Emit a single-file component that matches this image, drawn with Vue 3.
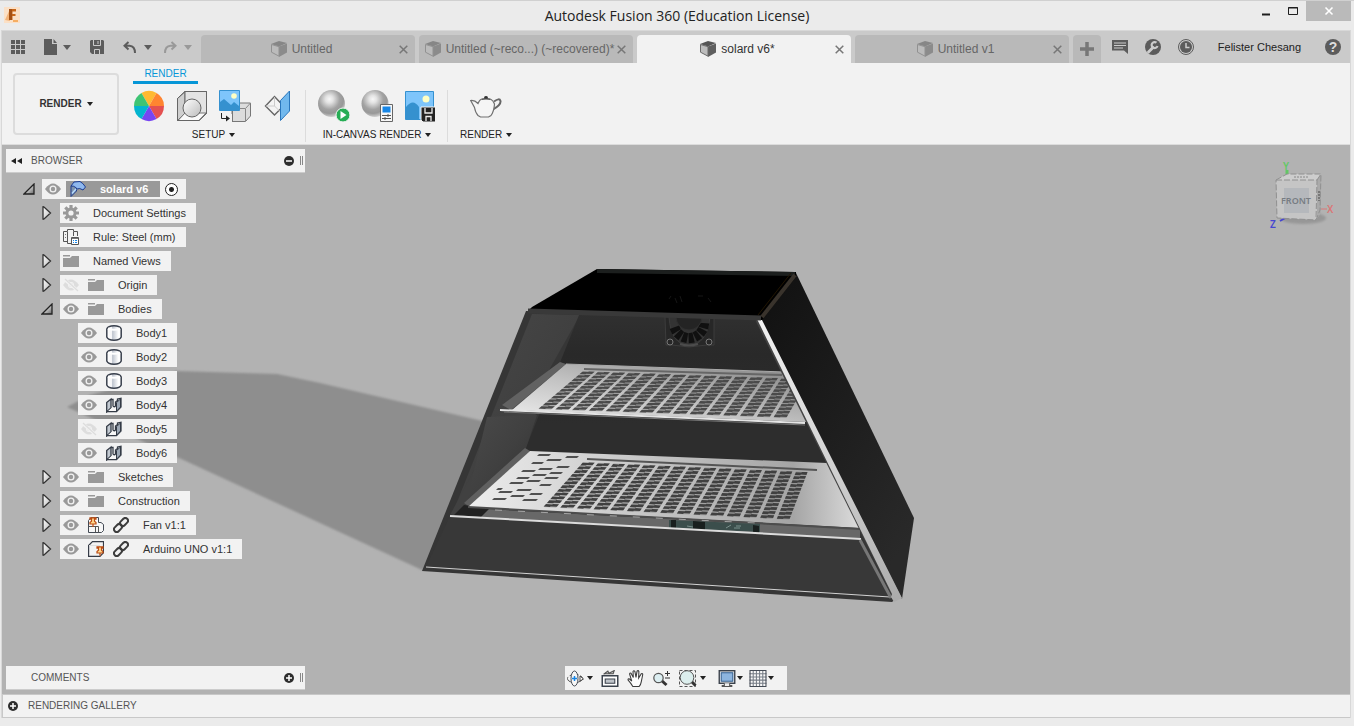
<script setup>
import { ref } from 'vue'

const tabs = [
  { title: 'Untitled', active: false },
  { title: 'Untitled (~reco...) (~recovered)*', active: false },
  { title: 'solard v6*', active: true },
  { title: 'Untitled v1', active: false }
]

const groups = [
  { label: 'SETUP', icons: [['appearance', 'Appearance'], ['scene', 'Scene Settings'], ['decal', 'Decal'], ['texture', 'Texture Map Controls']] },
  { label: 'IN-CANVAS RENDER', icons: [['play-ball', 'In-canvas Render'], ['set-ball', 'In-canvas Render Settings'], ['capture', 'Capture Image']] },
  { label: 'RENDER', icons: [['teapot', 'Render']] }
]

const rows = [
  { level: 1, open: false, icons: ['gear'], text: 'Document Settings' },
  { level: 1, icons: ['rule'], text: 'Rule: Steel (mm)' },
  { level: 1, open: false, icons: ['folder'], text: 'Named Views' },
  { level: 1, open: false, icons: ['eye-off', 'folder'], text: 'Origin' },
  { level: 1, open: true, icons: ['eye', 'folder'], text: 'Bodies' },
  { level: 2, icons: ['eye', 'body'], text: 'Body1' },
  { level: 2, icons: ['eye', 'body'], text: 'Body2' },
  { level: 2, icons: ['eye', 'body'], text: 'Body3' },
  { level: 2, icons: ['eye', 'sheet'], text: 'Body4' },
  { level: 2, icons: ['eye-off', 'sheet'], text: 'Body5' },
  { level: 2, icons: ['eye', 'sheet'], text: 'Body6' },
  { level: 1, open: false, icons: ['eye', 'folder'], text: 'Sketches' },
  { level: 1, open: false, icons: ['eye', 'folder'], text: 'Construction' },
  { level: 1, open: false, icons: ['eye', 'asm', 'link'], text: 'Fan v1:1' },
  { level: 1, open: false, icons: ['eye', 'part', 'link'], text: 'Arduino UNO v1:1' }
]

const nav = [
  { icon: 'orbit', name: 'Orbit', caret: true },
  { icon: 'lookat', name: 'Look At' },
  { icon: 'hand', name: 'Pan' },
  { icon: 'zoom', name: 'Zoom' },
  { icon: 'zoomwin', name: 'Fit', caret: true },
  { icon: 'monitor', name: 'Display Settings', caret: true, gap: true },
  { icon: 'grid', name: 'Grid and Snaps', caret: true }
]

const activeRoot = ref('solard')

// Slots of a perforated shelf, interpolated between the corners of its grid.
function perforations(tl, tr, br, bl, cols, rowCount) {
  const at = (u, v) => {
    const x = (tl[0] * (1 - u) + tr[0] * u) * (1 - v) + (bl[0] * (1 - u) + br[0] * u) * v
    const y = (tl[1] * (1 - u) + tr[1] * u) * (1 - v) + (bl[1] * (1 - u) + br[1] * u) * v
    return x.toFixed(1) + ' ' + y.toFixed(1)
  }
  let slots = ''
  let bands = ''
  for (let c = 0; c < cols; c++) {
    const u0 = (c + 0.02) / cols
    const um = (c + 0.4) / cols
    const u1 = (c + 0.78) / cols
    bands += `M${at(u0, 0)}L${at(u1, 0)} ${at(u1, 1)} ${at(u0, 1)}Z`
    for (let r = 0; r < rowCount; r++) {
      const v0 = (r + 0.14) / rowCount
      const v1 = (r + 0.82) / rowCount
      const s = 0.07 / rowCount
      slots += `M${at(u0, v0 + s)}L${at(um, v0 + s)} ${at(um, v0 - s)} ${at(u1, v0 - s)} ${at(u1, v1 - s)} ${at(um, v1 - s)} ${at(um, v1 + s)} ${at(u0, v1 + s)}Z`
    }
  }
  return { slots, bands }
}

const upper = perforations([583, 371], [812, 379], [790, 418], [538, 409], 15, 11)
const lower = perforations([583, 462], [811, 472], [793, 520], [543, 507], 15, 12)
const looseHoles = [
  [538, 454, 13], [566, 456, 13], [547, 459, 15], [532, 462, 12], [557, 466, 13], [539, 468, 14],
  [522, 470, 14], [550, 472, 13], [533, 474, 14], [545, 477, 14], [517, 477, 13], [527, 480, 14],
  [510, 482, 14], [540, 484, 12], [497, 488, 6], [517, 489, 15], [499, 491, 14], [530, 493, 13],
  [511, 495, 14], [493, 498, 14], [523, 499, 15]
].map(([x, y, w]) => `M${x + 1} ${y}h${w - 1}l-2 2h${1 - w}z`).join('')
const blades = [10, 34, 58, 82, 106, 130, 154]
</script>

<template>
  <div class="app">
    <svg class="defs" width="0" height="0" aria-hidden="true">
      <defs>
        <radialGradient id="ball" cx=".42" cy=".34" r=".7">
          <stop offset="0" stop-color="#f7f7f7" /><stop offset=".2" stop-color="#e3e3e3" /><stop offset=".55" stop-color="#a2a2a2" /><stop offset=".75" stop-color="#989898" /><stop offset="1" stop-color="#dedede" />
        </radialGradient>
        <linearGradient id="grey" x1="0" y1="0" x2="1" y2="1"><stop offset="0" stop-color="#fff" /><stop offset="1" stop-color="#bbb" /></linearGradient>
        <linearGradient id="dusk" x1="0" y1="0" x2="1" y2="1"><stop offset=".3" stop-color="#eee" /><stop offset="1" stop-color="#666" /></linearGradient>
        <linearGradient id="cyl"><stop offset="0" stop-color="#fff" /><stop offset=".35" stop-color="#f5f5f7" /><stop offset=".4" stop-color="#bfc5cf" /><stop offset=".8" stop-color="#fff" /></linearGradient>
      </defs>
      <symbol id="fusion" viewBox="0 0 16 16"><path d="M0 0h16v16H0z" fill="#fbe0c6" /><path d="M1 13 6 2v12z" fill="#f3b47a" /><path d="M5 2h7v2.500H8.500V7h3v2h-3v4H5z" fill="#c76618" /><path d="M5 2h3v11H5z" fill="#8f4312" opacity=".6" /><path d="M9 14h5" stroke="#f5ad62" stroke-width="2" /></symbol>
      <symbol id="apps" viewBox="0 0 14 14"><path d="M0 0h4v4H0zM5 0h4v4H5zM10 0h4v4h-4zM0 5h4v4H0zM5 5h4v4H5zM10 5h4v4h-4zM0 10h4v4H0zM5 10h4v4H5zM10 10h4v4h-4z" fill="#5c5c5c" /></symbol>
      <symbol id="file" viewBox="0 0 14 16"><path d="M0 0h8v5h5v11H0zM9.500 0 13 4H9.500z" fill="#5c5c5c" /></symbol>
      <symbol id="save" viewBox="0 0 14 14"><path d="M1 0h12l1 1v13H2l-2-2V1z" fill="#5c5c5c" /><path d="M3.500 0v5.500h7V0M4.500 14V9.500h5V14" fill="none" stroke="#ccc" /><path d="M8 1v3" stroke="#ccc" /></symbol>
      <symbol id="undo" viewBox="0 0 14 13"><path d="M5.500 1 1.500 4.700l4 3.700M2 4.700h4.500Q12 5 12 12" fill="none" stroke="#5c5c5c" stroke-width="2" /></symbol>
      <symbol id="redo" viewBox="0 0 14 13"><path d="m8.500 1 4 3.700-4 3.700M12 4.700H7.500Q2 5 2 12" fill="none" stroke="#999" stroke-width="2" /></symbol>
      <symbol id="cube" viewBox="0 0 16 16"><path d="m0 3 8-3 8 2-8 3.500z" fill="#555" /><path d="m8 5.500 8-3v9L8 16z" fill="#5f5f5f" /><path d="M.5 3.500 8 5.700v9.500l-7.500-4z" fill="#bdbdbd" stroke="#6a6a6a" /></symbol>
      <symbol id="cross" viewBox="0 0 9 9"><path d="m.7.7 7.600 7.600m0-7.600L.7 8.300" fill="none" stroke="currentColor" stroke-width="1.500" /></symbol>
      <symbol id="chat" viewBox="0 0 16 15"><path d="M0 0h16v14l-4-3.500H0z" fill="#5c5c5c" /><path d="M2 3h12M2 5.500h12M2 8h9" stroke="#ccc" /></symbol>
      <symbol id="wrench" viewBox="0 0 16 16"><circle cx="8" cy="8" r="8" fill="#5c5c5c" /><path d="m3.500 13 4.500-4.500" stroke="#ccc" stroke-width="3" stroke-linecap="round" /><path d="M11.500 3.700A3 3 0 1 0 12.500 7" fill="none" stroke="#ccc" stroke-width="2.200" /></symbol>
      <symbol id="clock" viewBox="0 0 16 16"><circle cx="8" cy="8" r="7.500" fill="none" stroke="#5c5c5c" /><circle cx="8" cy="8" r="6" fill="#5c5c5c" /><path d="M8 4v4.500h3.500" fill="none" stroke="#ccc" stroke-width="1.500" /></symbol>
      <symbol id="appearance" viewBox="0 0 32 32"><g transform="translate(16 16)"><path d="M0 0-7.500-13A15 15 0 0 1 7.500-13z" fill="#ffb932" /><path d="M0 0 7.500-13A15 15 0 0 1 15 0z" fill="#ff8430" /><path d="M0 0h15A15 15 0 0 1 7.500 13z" fill="#e45050" /><path d="m0 0 7.500 13a15 15 0 0 1-15 0z" fill="#7745f2" /><path d="M0 0-7.500 13A15 15 0 0 1-15 0z" fill="#04b5cf" /><path d="M0 0h-15A15 15 0 0 1-7.500-13z" fill="#3ec474" /></g></symbol>
      <symbol id="scene" viewBox="0 0 32 32"><path d="M1.500 8.500 9 1.500V23l-7.500 7.500z" fill="#cfcfcf" stroke="#666" /><path d="M9 1.500h21.500v22L23 30.500H1.500L9 23z" fill="#e3e3e3" stroke="#666" /><path d="m9 23-7 7.500h21l7-7.500z" fill="#fafafa" stroke="#777" /><circle cx="16" cy="18" r="9" fill="url(#grey)" stroke="#666" /><path d="M1.500 30.500H23l7.500-7V1.500H9l-7.500 7z" fill="none" stroke="#666" /></symbol>
      <symbol id="decal" viewBox="0 0 32 32"><path d="M13 18.500 19 13h12.500v13l-5 5.500H13z" fill="#dcdcdc" stroke="#777" /><path d="M26.500 31V18.500l5-5.500M26 18.500H14" fill="none" stroke="#888" /><path d="M0 21h10.500v3H13v8H0z" fill="#f2f2f2" /><path d="M13.500 21v10.500" stroke="#777" /><path d="M.5.5h20v20H.5z" fill="#7ec5fb" stroke="#3591d0" /><path d="M1 20v-8l4-3 7 6 3-3 5 4v4z" fill="#3591cf" /><circle cx="15" cy="6" r="2.800" fill="#ffffc4" /><path d="M2.500 23v5.500H8" fill="none" stroke="#222" /><path d="m7 25.500 4 3-4 3z" fill="#222" /></symbol>
      <symbol id="texture" viewBox="0 0 32 32"><path d="m3.500 16 9-9.500 9 9.500-9 9z" fill="#f4f4f4" stroke="#666" stroke-width="1.400" /><path d="M12.500 7v9L4 16M12.500 16l8 8" stroke="#ccc" fill="none" /><path d="M18.500 10.500 27.500 1v20l-9 9.500z" fill="#71b8ed" stroke="#2a77bd" /></symbol>
      <symbol id="play-ball" viewBox="0 0 32 32"><circle cx="13.500" cy="13.500" r="13.500" fill="url(#ball)" /><circle cx="25" cy="25" r="7" fill="#27ad55" stroke="#f5f5f5" /><path d="m22.500 21 6 4-6 4z" fill="#fff" /></symbol>
      <symbol id="set-ball" viewBox="0 0 32 32"><circle cx="14" cy="13.500" r="13.500" fill="url(#ball)" /><path d="M19.500 14.500h12v17h-12z" fill="#f7f7f7" stroke="#666" /><path d="M21.500 16.500h8v6h-8z" fill="#1786e6" /><path d="M21 25.500h9M21 28.500h9M27 24v3M24 27v3" stroke="#555" /></symbol>
      <symbol id="capture" viewBox="0 0 32 32"><path d="M1.500 1.500h28v28h-28z" fill="#7ec5fb" stroke="#3591d0" /><path d="M2 29V17q7-9 13 0v12z" fill="#3591cf" /><circle cx="22" cy="9" r="3.500" fill="#ffffc4" /><path d="M17 17h14.500v15H19l-2-2z" fill="#222" stroke="#f2f2f2" /><path d="M21 18v5h7v-5M22 31v-4.500h5V31" fill="none" stroke="#eee" stroke-width="1.300" /></symbol>
      <symbol id="teapot" viewBox="0 0 32 32"><path d="M24 11.500q5.500-4 6.500-.5.500 4-7 8" fill="none" stroke="#666" stroke-width="2" /><path d="M.7 10.500q4-.5 7.300 3 1.500-4 4-4.500h8q3 1 4.500 5-.500 7.500-3.500 11.500l-2.500 1.500h-8L8 25.500Q5.500 23 4.500 17.500z" fill="#f5f5f5" stroke="#707070" stroke-width="1.200" /><path d="M12 9.300q4-1.500 8 0" fill="none" stroke="#555" stroke-width="1.300" /><path d="M14.300 8.500q-.8-2.500 1.700-2.500t1.700 2.500z" fill="#333" /></symbol>
      <symbol id="eye" viewBox="0 0 16 16"><path d="M0 8q8-11 16 0-8 11-16 0z" fill="#999" /><circle cx="8" cy="8" r="3.500" fill="#f2f2f2" /><circle cx="8" cy="8" r="2.200" fill="#999" /></symbol>
      <symbol id="eye-off" viewBox="0 0 16 16"><path d="M0 8q8-11 16 0-8 11-16 0z" fill="#ddd" /><circle cx="8" cy="8" r="3" fill="#f2f2f2" /><circle cx="8" cy="8" r="2" fill="#ddd" /><path d="m1 2 14 12" stroke="#f2f2f2" stroke-width="3" /><path d="m2 2 13 12" stroke="#ddd" stroke-width="1.300" /></symbol>
      <symbol id="gear" viewBox="0 0 16 16"><path d="M8 0v16M0 8h16M2.300 2.300l11.400 11.400m0-11.400L2.300 13.700" stroke="#999" stroke-width="3.200" /><circle cx="8" cy="8" r="5.500" fill="#999" /><circle cx="8" cy="8" r="2.600" fill="#f2f2f2" /></symbol>
      <symbol id="rule" viewBox="0 0 16 16"><path d="M8 14.500H4.500v-2h-4v-10h4v-2h6v2h4V7M4.500 3v10M10.500 3v4" fill="none" stroke="#555" /><path d="M2.500 5v5" stroke="#777" stroke-dasharray="1 2" /><path d="M8.500 8.500h7v7h-7z" fill="#fff" stroke="#555" /><path d="M9 9h6v1H9z" fill="#777" /><path d="M10 11.500h4M10 13.500h4" stroke="#1786e6" stroke-dasharray="1 1 3 1" /></symbol>
      <symbol id="folder" viewBox="0 0 16 14"><path d="M0 1h7v1.500H0zM0 4h7l2-2h7v11H0z" fill="#999" /></symbol>
      <symbol id="body" viewBox="0 0 16 16"><path d="M.8 4Q2 .8 8 .8T15.200 4v8q-1.200 3.200-7.200 3.200T.8 12z" fill="url(#cyl)" stroke="#39404d" stroke-width="1.500" /><path d="M2 3.500q6 2.500 12 0" fill="none" stroke="#fff" stroke-width="2" /></symbol>
      <symbol id="sheet" viewBox="0 0 16 16"><path d="M.7 5.500 5 2v9l-4.300 4z" fill="#c3cad2" stroke="#343b46" stroke-width="1.300" /><path d="M1 15 5.500 11H10v4z" fill="#f8f8f8" /><path d="M5 2.500h2V9q1 1.500 2.500 0V5l2-1.500V2L15 1.300V10l-4.500 4.700H1" fill="none" stroke="#343b46" stroke-width="1.300" /><path d="M10.500 5.500 14.500 2v8l-4 4.200z" fill="#9da8b5" stroke="#343b46" /></symbol>
      <symbol id="asm" viewBox="0 0 16 16"><path d="M.5 3.500 3 .5h7.500v5L13 5.500l2.500 2v6l-2 2H.5z" fill="#f7f7f7" stroke="#444b55" /><path d="M.5 9.500h10v6M7.500 9.500v6" fill="none" stroke="#555" /><use href="#pin" x="1" y="0" width="8" height="10" /></symbol>
      <symbol id="part" viewBox="0 0 16 16"><path d="M.6 4.500 4.500.6h11v11l-3.500 3.800H.6z" fill="#f3f3f3" stroke="#353b46" stroke-width="1.200" /><path d="M1 4.500h10.500V15" fill="none" stroke="#ddd" /><use href="#pin" x="8" y="5" width="8" height="10" /></symbol>
      <symbol id="pin" viewBox="0 0 8 10"><path d="M1 .8h6v1.400H5.500v2L7 5.500V7H1V5.500l1.500-1.300v-2H1z" fill="#ffd98d" stroke="#bc4b13" stroke-width="1.200" /><path d="M4 7v3" stroke="#bc4b13" stroke-width="1.200" /></symbol>
      <symbol id="link" viewBox="0 0 16 16"><g fill="none" stroke="#3d3d3d" stroke-width="2"><rect x="-4.500" y="-2.700" width="9" height="5.400" rx="2.700" transform="translate(11 5) rotate(-45)" /><rect x="-4.500" y="-2.700" width="9" height="5.400" rx="2.700" transform="translate(5 11) rotate(-45)" /></g></symbol>
      <symbol id="plane" viewBox="0 0 16 16"><path d="m1 5 3-4 6-.5Q13 2 15.500 6L13 9Q9.500 6.500 7 8z" fill="#8fb8ee" stroke="#1c3c91" /><path d="M1 5v10.500L6.500 10V7Q3.500 4.500 1 5z" fill="#7f93ad" stroke="#1d3c8d" /><path d="m2 12.500 4-4.500" stroke="#b5dcff" stroke-width="1.500" /></symbol>
      <symbol id="closed" viewBox="0 0 12 14"><path d="M2 .8Q2 .5 3 1l6.500 6L3 13q-1 .5-1 0z" fill="url(#grey)" stroke="#333" stroke-width="1.300" /></symbol>
      <symbol id="opened" viewBox="0 0 12 12"><path d="M11 1v10H1z" fill="url(#dusk)" stroke="#222" stroke-width="1.300" /></symbol>
      <symbol id="orbit" viewBox="0 0 18 16"><ellipse cx="8" cy="8" rx="7.500" ry="4" fill="#f7f7f7" stroke="#555" stroke-dasharray="9 2" /><ellipse cx="7.500" cy="8" rx="3.500" ry="7.500" fill="#f7f7f7" stroke="#444b55" /><path d="M7.500 5.500v5M5 8h5" stroke="#1786e6" stroke-width="1.500" /><path d="m13 5.500 3.500 3-3.500 2z" fill="#fff" stroke="#444" /></symbol>
      <symbol id="lookat" viewBox="0 0 16 16"><path d="m2 4 4-3 1 2 5-2.500-1 3H3z" fill="#bbb" stroke="#555" /><path d="M.7 5.500h14.600v9.800H.7z" fill="#fff" stroke="#3b424c" stroke-width="1.400" /><path d="M3.500 8.500h9v4h-9z" fill="#bfc4ca" stroke="#3b424c" /></symbol>
      <symbol id="hand" viewBox="0 0 16 16"><path d="M5 15.500Q3 12 .6 9.500q-.5-1.500 1.400-1l2 2L2 4q0-1.500 1.300-1L5.500 7 5.200 1.500q.8-1.500 1.800 0L8 7l1-6q1-1 1.700.3L10.500 7.500 13 3.500q1.500-.5 1.300 1L13 11q-.5 3-2 4.500z" fill="#fcfcfc" stroke="#3b3b3b" /></symbol>
      <symbol id="zoom" viewBox="0 0 18 16"><path d="m8.500 10 5 4.500" stroke="#333" stroke-width="3" /><circle cx="5.500" cy="7.500" r="4.700" fill="#dceef1" stroke="#555" stroke-width="1.200" /><path d="M12 3h5M14.500.5v5M12 7.500h5" stroke="#333" /></symbol>
      <symbol id="zoomwin" viewBox="0 0 18 17"><path d="M.5.500h16v16H.5z" fill="none" stroke="#555" stroke-dasharray="3 2" /><path d="m12 11 4.500 4.500" stroke="#333" stroke-width="3" /><circle cx="8" cy="7.500" r="6.800" fill="#dceeed" stroke="#555" /></symbol>
      <symbol id="monitor" viewBox="0 0 16 16"><path d="M.7.7h14.600v11.800H.7z" fill="#fff" stroke="#3b424c" stroke-width="1.300" /><path d="M2.500 2.500h11v8h-11z" fill="#8db5df" stroke="#315c8c" /><path d="M5.500 12.500v2h-2v1h9v-1h-2v-2" fill="#eee" stroke="#555" /></symbol>
      <symbol id="grid" viewBox="0 0 16 16"><path d="M.5.5h15v15H.5z" fill="#f8f8f8" /><path d="M3.500 0v16M6.500 0v16M9.500 0v16M12.500 0v16M0 3.500h16M0 6.500h16M0 9.500h16M0 12.500h16" stroke="#777e87" /><path d="M.5.5h15v15H.5z" fill="none" stroke="#444b55" /></symbol>
      <symbol id="minus" viewBox="0 0 10 10"><circle cx="5" cy="5" r="5" fill="#2d2d2d" /><path d="M2 5h6" stroke="#fff" stroke-width="1.500" /></symbol>
      <symbol id="plus" viewBox="0 0 10 10"><circle cx="5" cy="5" r="5" fill="#2d2d2d" /><path d="M2 5h6M5 2v6" stroke="#fff" stroke-width="1.500" /></symbol>
    </svg>

    <header class="titlebar">
      <svg class="logo"><use href="#fusion" /></svg>
      <h1>Autodesk Fusion 360 (Education License)</h1>
      <div class="win">
        <button aria-label="Minimize"><svg viewBox="0 0 10 10"><path d="M1 8.500h8" stroke="#1e1e1e" stroke-width="2" /></svg></button>
        <button aria-label="Maximize"><svg viewBox="0 0 10 10"><path d="M.5 1.500h9v7h-9zM0 2h10" fill="none" stroke="#1e1e1e" /></svg></button>
        <button class="close" aria-label="Close"><svg viewBox="0 0 10 10"><path d="m1.500 1.500 7 7m0-7-7 7" stroke="#fff" stroke-width="1.600" /></svg></button>
      </div>
    </header>

    <main class="frame">
      <div class="tabbar">
        <div class="quick">
          <button aria-label="Data Panel"><svg width="14" height="14"><use href="#apps" /></svg></button>
          <button aria-label="File"><svg width="14" height="16"><use href="#file" /></svg><i class="caret wide"></i></button>
          <button aria-label="Save"><svg width="14" height="14"><use href="#save" /></svg></button>
          <button aria-label="Undo"><svg width="14" height="13"><use href="#undo" /></svg><i class="caret wide"></i></button>
          <button class="dim" aria-label="Redo"><svg width="14" height="13"><use href="#redo" /></svg><i class="caret wide"></i></button>
        </div>
        <div class="tabs">
          <div v-for="t in tabs" :key="t.title" class="tab" :class="{ active: t.active }">
            <button class="doc"><svg width="16" height="16"><use href="#cube" /></svg><span>{{ t.title }}</span></button>
            <button class="x" :aria-label="'Close ' + t.title"><svg width="9" height="9"><use href="#cross" /></svg></button>
          </div>
          <button class="tab add" aria-label="New tab"><svg width="14" height="14" viewBox="0 0 14 14"><path d="M7 0v14M0 7h14" stroke="#777" stroke-width="3.500" /></svg></button>
        </div>
        <div class="account">
          <button aria-label="Comments"><svg width="16" height="15"><use href="#chat" /></svg></button>
          <button aria-label="Extensions"><svg width="16" height="16"><use href="#wrench" /></svg></button>
          <button aria-label="Job Status"><svg width="16" height="16"><use href="#clock" /></svg></button>
          <button class="user">Felister Chesang</button>
          <button class="help" aria-label="Help">?</button>
        </div>
      </div>

      <div class="ribbon">
        <button class="workspace">RENDER <i class="caret"></i></button>
        <div class="ribbon-main">
          <button class="ribbon-tab">RENDER</button>
          <div class="groups">
            <section v-for="g in groups" :key="g.label" class="group">
              <div class="tools">
                <button v-for="[id, name] in g.icons" :key="id" :aria-label="name"><svg width="32" height="32"><use :href="'#' + id" /></svg></button>
              </div>
              <button class="glabel">{{ g.label }} <i class="caret"></i></button>
            </section>
          </div>
        </div>
      </div>

      <div class="canvas">
        <svg class="scene" viewBox="0 0 1348 549" role="img" aria-label="Solar dryer model">
          <defs>
            <linearGradient id="wall" x1="0" y1="0" x2="1" y2="1"><stop offset="0" stop-color="#4a4a4a" /><stop offset=".5" stop-color="#404040" /><stop offset="1" stop-color="#303030" /></linearGradient>
            <linearGradient id="shelfA" x1="0" y1="1" x2="1" y2="0"><stop offset="0" stop-color="#efefef" /><stop offset=".45" stop-color="#c2c2c2" /><stop offset="1" stop-color="#808080" /></linearGradient>
            <linearGradient id="shelfB"><stop offset="0" stop-color="#ededed" /><stop offset=".4" stop-color="#cacaca" /><stop offset=".83" stop-color="#a5a5a5" /><stop offset="1" stop-color="#dcdcdc" /></linearGradient>
            <linearGradient id="side" x1="0" y1="0" x2=".7" y2="1"><stop offset="0" stop-color="#101010" /><stop offset="1" stop-color="#292929" /></linearGradient>
            <linearGradient id="rear" x1="0" y1="0" x2="0" y2="1"><stop offset="0" stop-color="#303030" /><stop offset=".18" stop-color="#292929" /><stop offset=".5" stop-color="#2d2d2d" /></linearGradient>
            <linearGradient id="rail" x1="0" y1="0" x2="0" y2="1"><stop offset="0" stop-color="#f2f2f2" /><stop offset=".55" stop-color="#d0d0d0" /><stop offset="1" stop-color="#aaa" /></linearGradient>
            <filter id="soft"><feGaussianBlur stdDeviation="1" /></filter>
          </defs>
          <g transform="translate(-2 -145)">
            <path d="M67 407 90 395 177 371 277 374 320 383 500 425 440 568 422 570 320 523 177 457z" fill="#8e8e8e" filter="url(#soft)" />
            <path d="M526 311 760 318 897 598 892 602 422 571z" fill="#363636" />
            <path d="M532 314 580 315 470 510 434 560z" fill="url(#wall)" />
            <path d="M579 315 760 319 864 532 500 520 525 450z" fill="url(#rear)" />
            <path d="M536 414 500 515 470 510 450 515 506 411z" fill="#414141" />
            <path d="M537 415 526 448 466 504 487 417z" fill="url(#wall)" />

            <g fill="#272727" stroke="#3c3c3c">
              <path d="M665 317h49v28h-7l-18 2-17-2h-6z" />
              <path d="M669 317q2 28 20 28t21-28" fill="#333" />
              <g transform="translate(689 323)" stroke="none">
                <path v-for="b in blades" :key="b" d="M10-2 20-3 20 3 10 2z" :transform="`rotate(${b})`" fill="#101010" />
              </g>
              <path d="M676 317a13 13 0 0 0 26 0" fill="#242424" stroke="#303030" />
              <circle cx="670" cy="342" r="3" stroke="#777" /><circle cx="709" cy="342" r="3" stroke="#777" />
            </g>
            <path d="M680 344q9 3 18 0" stroke="#4c4c4c" fill="none" stroke-width="2" />

            <path d="m560 362 6 2-55 46-9-5z" fill="#626262" />
            <path d="m566 364 218 8 23 46-1 4-294-12z" fill="url(#shelfA)" />
            <path d="m584 369 198 6" stroke="#666" stroke-width="2" />
            <path :d="upper.bands" fill="#777" opacity=".5" />
            <path :d="upper.slots" fill="#4a4a4a" />
            <path d="m500 410 305 13" stroke="#e4e4e4" stroke-width="2" />
            <path d="m504 412 301 13" stroke="#777" />
            <path d="m566 364 218 8" stroke="#aaa" />

            <path d="m525 448 5 3-60 56-6-4z" fill="#606060" />
            <path d="m485 509 375 20v10l-400-23z" fill="#686868" />
            <path d="m464 505 25 4-8 8-27-2z" fill="#222" />
            <path d="m530 451 297 12 33 65-392-21z" fill="url(#shelfB)" />
            <path d="m587 459 230 11" stroke="#555" stroke-width="2" />
            <path :d="lower.bands" fill="#777" opacity=".35" />
            <path :d="lower.slots" fill="#404040" />
            <path :d="looseHoles" fill="#505050" />
            <path d="m468 507 392 22" stroke="#4d4d4d" stroke-width="2" />
            <path d="m495 510 260 13" stroke="#a5a5a5" stroke-dasharray="7 16" />
            <path d="m669 520 91 4v8l-91-4z" fill="#3b4e4c" />
            <path d="m671 520 5 0v9l-5-1zm22 1 12 1v8l-12-1zm60 4 6 1v7l-6-1z" fill="#181f1e" />
            <path d="m726 528 5-3m3 3h6m-4-2h5m-54 0 6 1" stroke="#7b918d" />

            <path d="m450 516 410 23 31 59-466-29z" fill="#383838" />
            <path d="m450 516 411 23" stroke="#dcdcdc" stroke-width="2" />
            <path d="m426 567 464 30" stroke="#d2d2d2" />
            <path d="m860 540 31 58" stroke="#777" stroke-width="3" />
            <path d="m864 538 28 56" stroke="#333" stroke-dasharray="2 1" />

            <path d="M796 273 914 518 902 599 760 320z" fill="url(#side)" />
            <path d="m757 320 138 278" stroke="#444" stroke-width="3" />
            <path d="m757 319 5 1 140 278-8 4-3-5 1-3z" fill="url(#rail)" />
            <path d="m597 269 199 3v5l-34 43-234-9 4-4z" fill="#000" />
            <path d="m597 271 198 3" stroke="#1c1f1e" stroke-width="4" />
            <path d="m528 311 233 7" stroke="#393939" stroke-width="5" />
            <path d="m762 317 33-42" stroke="#39332c" stroke-width="4" />
            <path d="m758 315 33-42" stroke="#221603" />
            <path d="m669 299 2-3m4 2 2 5m3-7 2 6m16-6h5m5 2 3 4" stroke="#161616" />
          </g>
        </svg>

        <svg class="cube" width="70" height="74" viewBox="0 0 70 74" aria-label="View cube">
          <ellipse cx="35" cy="58" rx="23" ry="6" fill="#777" opacity=".45" filter="url(#soft)" />
          <path d="M19 22V10" stroke="#62c865" stroke-width="3" />
          <path d="M51 49h8" stroke="#da7777" /><path d="m12 61 7-4" stroke="#4646d0" stroke-width="2" />
          <path d="m8 20 11-6h34l-4 6z" fill="#cdcdcd" /><path d="m49 20 4-6v39l-5 7z" fill="#aaa" /><path d="M8 20h41v40L9 58z" fill="#c5c5c5" />
          <path d="M16 28h25v25H16z" fill="#b5b8bc" />
          <path d="m8 20 11-6h34l-1 36-4 10-39-2zM8 20h41l-1 40M49 20l4-6" fill="none" stroke="#909090" stroke-dasharray="6 2" />
          <path d="M26 17h15" stroke="#888" stroke-dasharray="2 1" /><path d="M51 31v10" stroke="#777" stroke-width="2" stroke-dasharray="2 1" />
          <text x="28" y="44" class="face">FRONT</text>
          <text x="15" y="10" class="ax y">Y</text><text x="59" y="53" class="ax x">X</text><text x="2" y="68" class="ax z">Z</text>
        </svg>

        <div class="panel">
          <button class="rewind" aria-label="Collapse browser"><svg width="11" height="6" viewBox="0 0 11 6"><path d="M5 0v6L0 3zM11 0v6L6 3z" fill="#222" /></svg></button>
          <span class="ptitle">BROWSER</span>
          <button aria-label="Minimize browser"><svg width="10" height="10"><use href="#minus" /></svg></button><i class="grip"></i>
        </div>

        <ul class="tree">
          <li>
            <button class="exp" aria-label="Collapse solard v6"><svg width="12" height="12"><use href="#opened" /></svg></button>
            <div class="node root">
              <svg width="16" height="16"><use href="#eye" /></svg>
              <span class="sel"><svg width="16" height="16"><use href="#plane" /></svg><b>solard v6</b></span>
              <input v-model="activeRoot" type="radio" value="solard" aria-label="Activate solard v6">
            </div>
          </li>
          <li v-for="r in rows" :key="r.text" :class="'l' + r.level">
            <button v-if="r.open !== undefined" class="exp" :aria-label="'Toggle ' + r.text">
              <svg width="12" :height="r.open ? 12 : 14"><use :href="r.open ? '#opened' : '#closed'" /></svg>
            </button>
            <span v-else class="exp"></span>
            <div class="node"><svg v-for="i in r.icons" :key="i" width="16" :height="i === 'folder' ? 14 : 16"><use :href="'#' + i" /></svg><span class="name">{{ r.text }}</span></div>
          </li>
        </ul>

        <div class="bottom">
          <div class="panel">
            <span class="rewind"></span><span class="ptitle">COMMENTS</span>
            <button aria-label="Expand comments"><svg width="10" height="10"><use href="#plus" /></svg></button><i class="grip"></i>
          </div>
          <nav class="navbar">
            <button v-for="n in nav" :key="n.icon" :aria-label="n.name" :class="{ gap: n.gap }"><svg width="18" height="17"><use :href="'#' + n.icon" /></svg><i v-if="n.caret" class="caret"></i></button>
          </nav>
        </div>
      </div>

      <footer class="gallery">
        <button aria-label="Expand rendering gallery"><svg width="10" height="10"><use href="#plus" /></svg></button>
        <span>RENDERING GALLERY</span>
      </footer>
    </main>
  </div>
</template>

<style>
body { margin: 0; }
</style>

<style scoped>
.app { min-height: 100vh; box-sizing: border-box; display: flex; flex-direction: column; padding-bottom: 8px; background: #ebebeb; font: 11px/14px "Liberation Sans", Arial, sans-serif; color: #333; }
.defs { position: absolute; }
button { display: flex; align-items: center; padding: 0; border: 0; background: none; color: inherit; font: inherit; }
svg { display: block; flex: none; }
.caret { display: inline-block; border: 3px solid transparent; border-top: 4px solid #222; border-bottom: 0; }
.caret.wide { border-width: 5px 4px 0; border-top-color: #5c5c5c; }

.titlebar { display: grid; grid-template-columns: 1fr auto 1fr; height: 30px; box-sizing: border-box; border-top: 1px solid #d0d0d0; }
.logo { width: 16px; height: 16px; margin: 6px 0 0 4px; }
h1 { margin: 0; font: 14px/29px "Open Sans", "Noto Sans", sans-serif; color: #222; }
.win { display: flex; justify-content: flex-end; align-items: flex-start; padding-right: 3px; }
.win button { width: 27px; height: 20px; justify-content: center; }
.win svg { width: 10px; height: 10px; }
.win .close { width: 45px; background: #bababa; }

.frame { flex: 1; display: flex; flex-direction: column; margin: 0 3px 0 1px; border: 1px solid #d8d8d8; border-width: 1px 1px 0; }
.tabbar { display: flex; align-items: flex-end; height: 32px; background: #cacaca; }
.quick { display: flex; align-items: center; height: 32px; gap: 19px; width: 190px; padding-left: 9px; flex: none; }
.quick button { gap: 5px; }
.quick button:nth-child(4) { gap: 7px; }
.quick button:nth-child(5) { gap: 7px; margin-left: -8px; }
.quick button:nth-child(5) .caret { border-top-color: #999; }
.tabs { display: flex; flex: 1; min-width: 0; gap: 4px; }
.tab { display: flex; flex: 0 1 214px; min-width: 0; align-items: center; box-sizing: border-box; height: 28px; padding: 0 7px 0 3px; border-radius: 4px 4px 0 0; background: #b9b9b9; color: #666; }
.doc { flex: 1; min-width: 0; justify-content: center; gap: 5px; font-size: 12px; white-space: nowrap; }
.doc svg { opacity: .5; }
.x { color: #777; }
.tab.active { background: #f2f2f2; color: #333; }
.tab.active .doc svg { opacity: 1; }
.tab.add { flex: 0 0 28px; justify-content: center; padding: 0; }
.account { display: flex; align-items: center; height: 32px; gap: 17px; padding-right: 9px; flex: none; }
.user { margin: 0 7px; color: #222; white-space: nowrap; }
.help { width: 16px; height: 16px; justify-content: center; border-radius: 50%; background: #5c5c5c; color: #ddd; font-size: 14px; font-weight: bold; }

.ribbon { display: flex; height: 81px; border-bottom: 1px solid #dcdcdc; background: #f2f2f2; }
.workspace { width: 106px; height: 62px; margin: 10px 14px 0 11px; box-sizing: border-box; justify-content: center; gap: 5px; border: 2px solid #dcdcdc; border-radius: 4px; font-weight: bold; font-size: 10px; }
.ribbon-tab { justify-content: center; width: 65px; height: 21px; padding-top: 3px; box-sizing: border-box; border-bottom: 3px solid #0696d7; color: #0696d7; font-size: 10px; }
.groups { display: flex; padding-top: 6px; }
.group { display: flex; flex-direction: column; align-items: center; padding: 0 11px 0 12px; border-right: 1px solid #dcdcdc; }
.group:first-child { padding-left: 0; }
.group:last-child { border: 0; }
.tools { display: flex; gap: 11px; }
.glabel { gap: 4px; margin-top: 6px; font-size: 10px; color: #222; }

.canvas { position: relative; display: flex; flex: 1; flex-direction: column; background: #b2b2b2; }
.scene { position: absolute; inset: 0; width: 100%; height: 100%; }
.cube { position: absolute; top: 15px; right: 12px; }
.face { font: 600 9px "Noto Sans", sans-serif; text-anchor: middle; fill: #777d83; }
.ax { font: 600 10px "Noto Sans", sans-serif; }
.ax.y { fill: #62c865; } .ax.x { fill: #da7777; } .ax.z { fill: #4646d0; }
.panel { position: relative; display: flex; align-items: center; width: 299px; height: 24px; box-sizing: border-box; margin: 4px 0 0 4px; padding: 0 2px 0 5px; background: #f2f2f2; border-bottom: 1px solid #ccc; }
.rewind { width: 20px; }
.ptitle { flex: 1; color: #555; font-size: 10px; }
.grip { width: 1px; height: 9px; margin-left: 6px; border: 1px solid #888; border-width: 0 1px; }
.tree { position: relative; display: flex; flex-direction: column; gap: 4px; margin: 6px 0 0 21px; padding: 0; list-style: none; flex: 1; }
.tree li { display: flex; align-items: center; height: 20px; }
.tree .l1 { padding-left: 18px; } .tree .l2 { padding-left: 36px; }
.exp { width: 19px; flex: none; }
.node { display: flex; align-items: center; gap: 9px; height: 20px; padding: 0 10px 0 3px; background: #f2f2f2; white-space: nowrap; }
.name { margin-left: 5px; }
.root { gap: 5px; padding-right: 8px; }
.sel { display: flex; align-items: center; gap: 14px; height: 16px; padding: 0 12px 0 4px; background: #999; color: #fff; }
.root input { appearance: none; width: 13px; height: 13px; margin: 0; border: 1px solid #222; border-radius: 50%; background: radial-gradient(circle, #222 0 2px, #fff 3px); }
.bottom { position: relative; display: grid; grid-template-columns: 1fr auto 1fr; align-items: end; padding-bottom: 4px; }
.bottom .panel { margin-top: 0; }
.navbar { display: flex; align-items: center; height: 24px; width: 220px; padding-left: 2px; background: #f2f2f2; }
.navbar button { gap: 3px; margin-right: 8px; }
.navbar button:first-child { gap: 2px; }
.navbar .gap { margin-left: 4px; }
.navbar button:nth-child(n+6) { gap: 1px; margin-right: 6px; }
.gallery { display: flex; align-items: center; gap: 10px; height: 22px; padding-left: 5px; background: #f2f2f2; border: 1px solid #c8c8c8; border-width: 1px 0 1px 1px; color: #555; font-size: 10px; }
</style>
